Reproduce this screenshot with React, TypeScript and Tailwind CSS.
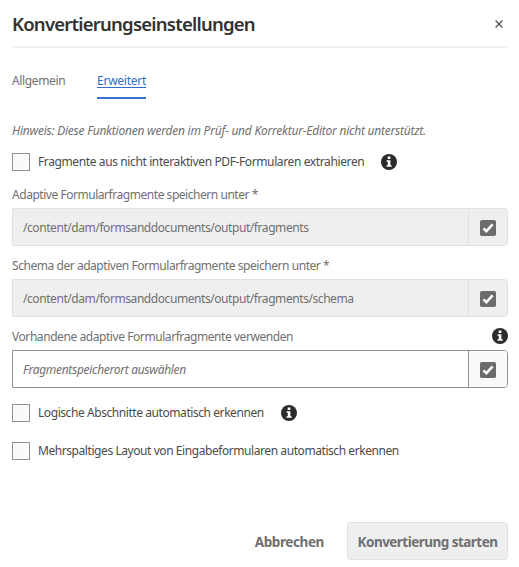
import type { ReactNode } from "react";

function InfoIcon({ className = "" }: { className?: string }) {
  return (
    <svg className={`size-4 shrink-0 ${className}`} viewBox="0 0 16 16" aria-label="Info">
      <circle cx="8" cy="8" r="8" fill="#2b2b2b" />
      <path d="M6.7 2.4h2.7v2.5H6.7zM5.6 6.2h3.8v5.1h1.3v1.5H5.5v-1.5h1.3V7.7H5.6z" fill="#fff" />
    </svg>
  );
}

function CheckIcon() {
  return (
    <svg className="size-4" viewBox="0 0 16 16">
      <rect width="16" height="16" rx="1.8" fill="#6c6c6c" />
      <path d="M3.4 8.4l3 2.8 6.2-6.8" fill="none" stroke="#fff" strokeWidth="2.5" />
    </svg>
  );
}

function Option({ children, className = "" }: { children: ReactNode; className?: string }) {
  return (
    <label className={`flex h-[18px] items-center whitespace-nowrap text-[#4b4b4b] ${className}`}>
      <span className="mr-2 size-[18px] shrink-0 border border-[#919191] bg-[#fafafa]" />
      {children}
    </label>
  );
}

function PathField({ children, enabled = false }: { children: ReactNode; enabled?: boolean }) {
  return (
    <div
      className={`flex h-[38px] rounded-r-[4px] border ${
        enabled ? "border-[#919191] bg-white" : "border-[#e1e1e1] bg-[#efefef]"
      }`}
    >
      <div className="flex flex-1 items-center whitespace-nowrap pt-0.5 pl-[10px]">{children}</div>
      <button
        className={`flex w-[39px] items-center justify-center rounded-r-[3px] border-l pt-0.5 ${
          enabled ? "border-[#919191] bg-[#fafafa]" : "border-[#e1e1e1]"
        }`}
      >
        <CheckIcon />
      </button>
    </div>
  );
}

export default function App() {
  return (
    <main className="h-[567px] w-[519px] bg-white pl-3 pr-[11px] font-['Noto_Sans',sans-serif] text-[12px] tracking-[-0.43px] text-[#707070]">
      <header className="flex h-12 items-center justify-between border-b-2 border-[#f0f0f0] pr-[5px]">
        <h1 className="whitespace-nowrap pt-px text-[18.5px] font-semibold tracking-[-0.77px] text-[#323232]">
          Konvertierungseinstellungen
        </h1>
        <svg className="mt-0.5 size-2" viewBox="0 0 8 8" aria-label="Close">
          <path d="M.6.6l6.8 6.8M7.4.6L.6 7.4" stroke="#555" strokeWidth="1.4" />
        </svg>
      </header>
      <nav className="flex h-[51px] items-end">
        <span className="h-[27px] w-[85px] tracking-[-0.37px]">Allgemein</span>
        <span className="h-[27px] w-[49px] border-b-2 border-[#3b72cf] tracking-[-0.25px] text-[#326ec8] underline underline-offset-2">
          Erweitert
        </span>
      </nav>
      <p className="mt-[23px] h-[18px] whitespace-nowrap italic leading-[18px] tracking-[-0.235px]">
        Hinweis: Diese Funktionen werden im Prüf- und Korrektur-Editor nicht unterstützt.
      </p>
      <Option className="mt-[13px]">
        <span className="tracking-[-0.385px]">Fragmente aus nicht interaktiven PDF-Formularen extrahieren</span>
        <InfoIcon className="ml-[17px]" />
      </Option>
      <div className="mt-[15px] h-[22px] leading-[18px] tracking-[-0.46px]">Adaptive Formularfragmente speichern unter *</div>
      <PathField>/content/dam/formsanddocuments/output/fragments</PathField>
      <div className="mt-[11px] h-[22px] leading-[18px] tracking-[-0.45px]">
        Schema der adaptiven Formularfragmente speichern unter *
      </div>
      <PathField>/content/dam/formsanddocuments/output/fragments/schema</PathField>
      <div className="mt-[11px] flex h-[22px] justify-between leading-[18px]">
        <span>Vorhandene adaptive Formularfragmente verwenden</span>
        <InfoIcon />
      </div>
      <PathField enabled>
        <span className="italic tracking-[-0.3px]">Fragmentspeicherort auswählen</span>
      </PathField>
      <Option className="mt-4">
        <span>Logische Abschnitte automatisch erkennen</span>
        <InfoIcon className="ml-[17px]" />
      </Option>
      <Option className="mt-5">
        <span>Mehrspaltiges Layout von Eingabeformularen automatisch erkennen</span>
      </Option>
      <footer className="mt-[62px] flex h-[38px] items-center justify-end gap-[23px] text-[13.5px] font-bold">
        <button className="pt-0.5 tracking-[-0.4px]">Abbrechen</button>
        <button className="h-[38px] w-[161px] whitespace-nowrap rounded-[4px] border border-[#e1e1e1] bg-[#efefef] pt-0.5 tracking-[-0.53px]">
          Konvertierung starten
        </button>
      </footer>
    </main>
  );
}
